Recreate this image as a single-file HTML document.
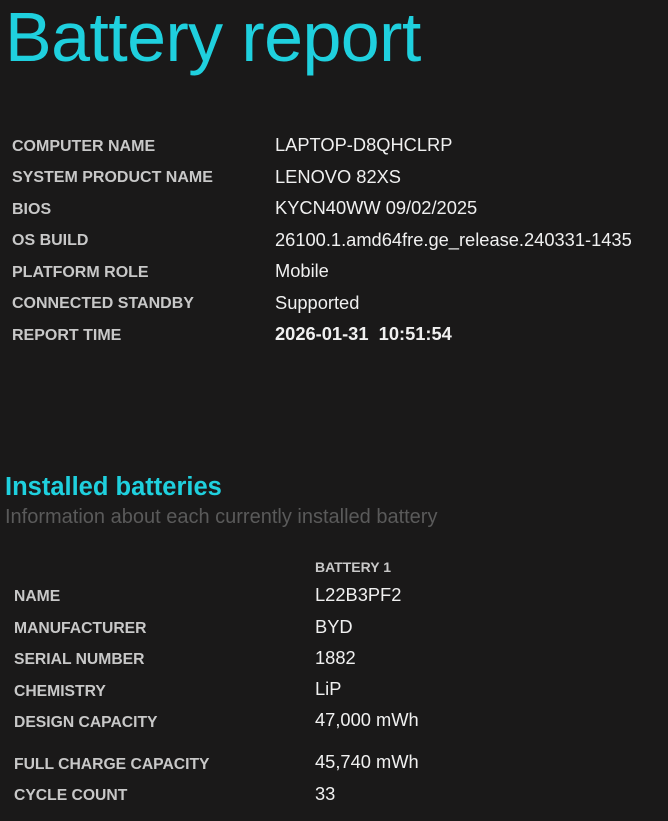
<!DOCTYPE html>
<html><head><meta charset="utf-8"><style>
body{margin:0;background:#1a1919;width:668px;height:821px;overflow:hidden;font-family:"Liberation Sans",sans-serif;position:relative}
.t{position:absolute;white-space:nowrap}
h1{position:absolute;margin:0;left:5px;top:-3px;font-size:70px;font-weight:normal;color:#1fd0de;letter-spacing:-0.6px}
.l{position:absolute;color:#c8c8c8;font-weight:bold;font-size:16px;white-space:nowrap;transform:translateY(calc(-50% + 2px))}
.l2{font-size:15.7px}
.v{position:absolute;color:#f0f0f0;font-size:18.3px;white-space:nowrap;transform:translateY(-50%)}
</style></head><body>
<h1>Battery report</h1>
<div class="l" style="left:12px;top:145px">COMPUTER NAME</div><div class="v" style="left:275px;top:145px">LAPTOP-D8QHCLRP</div>
<div class="l" style="left:12px;top:176px">SYSTEM PRODUCT NAME</div><div class="v" style="left:275px;top:177px">LENOVO 82XS</div>
<div class="l" style="left:12px;top:208px">BIOS</div><div class="v" style="left:275px;top:208px">KYCN40WW 09/02/2025</div>
<div class="l" style="left:12px;top:239px">OS BUILD</div><div class="v" style="left:275px;top:240px">26100.1.amd64fre.ge_release.240331-1435</div>
<div class="l" style="left:12px;top:271px">PLATFORM ROLE</div><div class="v" style="left:275px;top:271px">Mobile</div>
<div class="l" style="left:12px;top:302px">CONNECTED STANDBY</div><div class="v" style="left:275px;top:303px">Supported</div>
<div class="l" style="left:12px;top:334px">REPORT TIME</div><div class="v" style="left:275px;top:334px;font-weight:bold">2026-01-31&nbsp;&nbsp;10:51:54</div>
<div class="t" style="left:5px;top:473px;font-size:25.5px;font-weight:bold;color:#1fd0de">Installed batteries</div>
<div class="t" style="left:5px;top:506px;font-size:20px;color:#5a5a5a">Information about each currently installed battery</div>
<div class="l" style="left:315px;top:565px;font-size:14px">BATTERY 1</div>
<div class="l l2" style="left:14px;top:595px">NAME</div><div class="v" style="left:315px;top:595px">L22B3PF2</div>
<div class="l l2" style="left:14px;top:627px">MANUFACTURER</div><div class="v" style="left:315px;top:627px">BYD</div>
<div class="l l2" style="left:14px;top:658px">SERIAL NUMBER</div><div class="v" style="left:315px;top:658px">1882</div>
<div class="l l2" style="left:14px;top:690px">CHEMISTRY</div><div class="v" style="left:315px;top:689px">LiP</div>
<div class="l l2" style="left:14px;top:721px">DESIGN CAPACITY</div><div class="v" style="left:315px;top:720px">47,000 mWh</div>
<div class="l l2" style="left:14px;top:763px">FULL CHARGE CAPACITY</div><div class="v" style="left:315px;top:762px">45,740 mWh</div>
<div class="l l2" style="left:14px;top:794px">CYCLE COUNT</div><div class="v" style="left:315px;top:794px">33</div>
</body></html>
